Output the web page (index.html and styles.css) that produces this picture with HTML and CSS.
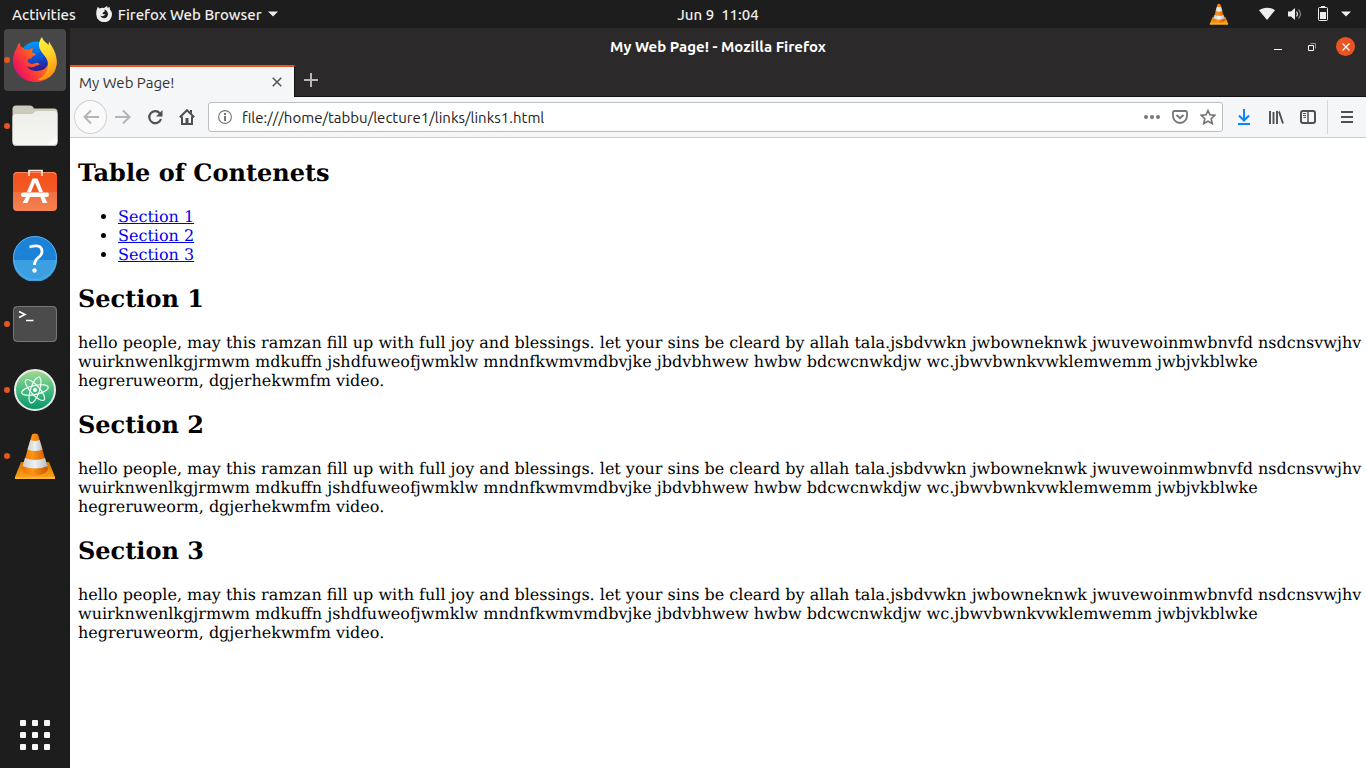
FILE: index.html
```html
<!DOCTYPE html>
<html lang="en">
<head>
<meta charset="utf-8">
<title>My Web Page! - Mozilla Firefox</title>
<link rel="stylesheet" href="styles.css">
</head>
<body class="desktop">
<svg width="0" height="0" class="defs" aria-hidden="true">
  <defs>
    <linearGradient id="coneBody" x1="0" x2="1" y1="0" y2="0"><stop offset="0" stop-color="#e87400"/><stop offset=".4" stop-color="#ff9416"/><stop offset="1" stop-color="#c85500"/></linearGradient>
    <linearGradient id="coneBase" x1="0" x2="0" y1="0" y2="1"><stop offset="0" stop-color="#d87500"/><stop offset="1" stop-color="#ffa61a"/></linearGradient>
    <linearGradient id="coneWhite" x1="0" x2="1" y1="0" y2="0"><stop offset="0" stop-color="#c9ced2"/><stop offset=".5" stop-color="#eef1f3"/><stop offset="1" stop-color="#b8bdc2"/></linearGradient>
    <symbol id="cone" viewBox="0 0 44 48">
      <path d="M8 30h28l6 15v2H2v-2z" fill="url(#coneBase)"/>
      <path d="M2 45h40v2H2z" fill="#ffb43b"/>
      <path d="M19 2.500q3-2 6 0L35 37q-2 6-13 6T9 37z" fill="url(#coneBody)"/>
      <path d="M17.400 8q4.600 2 9.200 0l3 9.500q-7.600 3-15.200 0z" fill="url(#coneWhite)"/>
      <path d="M12 26q10 4 20 0l2.500 8q-12 5-25 0z" fill="url(#coneWhite)"/>
    </symbol>
  </defs>
</svg>

<header class="topbar">
  <div class="topbar-side topbar-start">
    <button class="shell-button">Activities</button>
    <button class="shell-button app-menu">
      <svg width="16" height="16" viewBox="0 0 16 16"><path d="M1 3 1.800.8 3.500 2.500Q5.500 1.500 8 2L11 0l.8 2L13.500.8l.5 2.700c1.300 1.500 2 3 2 4.800A7.800 7.800 0 0 1 .3 8.500C.1 6.500.3 4.500 1 3z" fill="#eee"/><path d="M8.500 3.500Q12 5 12 8.200 11.500 12 8 12.200 5 12 4.200 9.500q1.800 1.200 3.500.3L9.500 8.500 6.500 8 7 6.500l1.700-1z" fill="#1d1d1d"/></svg>
      <span>Firefox Web Browser</span>
      <svg width="10" height="6" viewBox="0 0 10 6"><path d="M0 0.500h10L5 5.500z" fill="#eee"/></svg>
    </button>
  </div>
  <button class="shell-button clock">Jun 9&nbsp; 11:04</button>
  <div class="topbar-side topbar-end">
    <button class="shell-button" aria-label="VLC"><svg width="20" height="22"><use href="#cone"/></svg></button>
    <button class="shell-button status" aria-label="System menu">
      <svg width="16" height="14" viewBox="0 0 16 14"><path d="M0 3.200C4.500-.2 11.500-.2 16 3.200L8 13z" fill="#eee"/></svg>
      <svg width="16" height="14" viewBox="0 0 16 14"><path d="M1 4.500h3L8 1v12L4 9.500H1z" fill="#eee"/><path d="M9.500 4.500q2 2.500 0 5" fill="none" stroke="#ddd" stroke-width="1.200"/><path d="M11.500 2.500q4 4.500 0 9" fill="none" stroke="#888" stroke-width="1.200"/></svg>
      <svg width="16" height="16" viewBox="0 0 16 16"><path d="M6 0h4v2H6z" fill="#eee"/><rect x="3.500" y="1.500" width="9" height="13" rx="1" fill="none" stroke="#eee"/><path d="M5 6h6v7H5z" fill="#eee"/></svg>
      <svg class="status-arrow" width="10" height="6" viewBox="0 0 10 6"><path d="M0 .5h10L5 5.500z" fill="#eee"/></svg>
    </button>
  </div>
</header>

<div class="workspace">
  <nav class="dock" aria-label="Dock">
    <button class="dock-item running focused" aria-label="Firefox Web Browser">
      <svg width="46" height="46" viewBox="0 0 46 46">
        <defs>
          <linearGradient id="fxFire" x1="0" y1=".8" x2="1" y2=".2"><stop offset="0" stop-color="#c8108c"/><stop offset=".2" stop-color="#f5204f"/><stop offset=".5" stop-color="#ff5a22"/><stop offset="1" stop-color="#ffae12"/></linearGradient>
          <linearGradient id="fxGlobe" x1=".4" y1="0" x2=".6" y2="1"><stop offset="0" stop-color="#009cff"/><stop offset=".55" stop-color="#0755d5"/><stop offset="1" stop-color="#36148a"/></linearGradient>
          <linearGradient id="fxTail" x1=".2" y1="0" x2=".5" y2="1"><stop offset="0" stop-color="#fff23b"/><stop offset=".45" stop-color="#ffd62b"/><stop offset="1" stop-color="#ff8b13"/></linearGradient>
        </defs>
        <path d="M1 24.500c0-5 1-9.500 3.500-13Q5 8 7.500 5.500 8 9 9.500 10.500L36 12c6 3 9 8 8.500 15C43 38 34 45 23 45S1 36 1 24.500z" fill="url(#fxFire)"/>
        <path d="M12 10q5-5.500 13-5.500 12 2 12 18-1 11.500-13 11.500-7-.5-9.500-5 5 2.500 9 0 2.500-1.500 4-1l-.5-1.500q-2-1.500-5 0-3.500 1.500-6.500-2 0-2.500 2-3h2q.5-2 4.500-4-.5-1.500-4-2-.5-2 1.500-4.500-3 0-5 2-2.500-1-4.500-1z" fill="url(#fxGlobe)"/>
        <path d="M30 0c1 4 4 5 6.500 8L37 4.500l3 5c5 8 6.500 17 2.500 25-4 7-12 9-17 8.500 9-5 11.500-11 10-19C34 18 27 15 27 8c0-3 1-6 3-8z" fill="url(#fxTail)"/>
      </svg>
    </button>
    <button class="dock-item running" aria-label="Files">
      <svg width="46" height="42" viewBox="0 0 46 42">
        <defs><linearGradient id="folder" x1="0" x2="0" y1="0" y2="1"><stop offset="0" stop-color="#eeeeeb"/><stop offset="1" stop-color="#f6f6f3"/></linearGradient></defs>
        <path d="M.5 37V4Q.5.500 4 .5h14q2.500 0 3 1.500l1 1.500H42q3.500 0 3.500 3.500v30z" fill="#cdc9bb"/>
        <path d="M.5 12q0-3 3.500-3h15q2 0 3-1.500T25 6h17q3.500 0 3.500 3v28q0 4-4 4h-37q-4 0-4-4z" fill="url(#folder)"/>
        <path d="M35 40.500 45 30v7q0 3.500-4 3.500z" fill="#fbfbf9"/>
        <path d="M1 38.500q1 2 4 2h36q4 0 4-2" fill="none" stroke="#bdbbb5"/>
      </svg>
    </button>
    <button class="dock-item" aria-label="Ubuntu Software">
      <svg width="46" height="46" viewBox="0 2 46 46">
        <defs><linearGradient id="bag" x1="0" x2="0" y1="0" y2="1"><stop offset="0" stop-color="#f4511b"/><stop offset=".5" stop-color="#f25a27"/><stop offset=".52" stop-color="#f07040"/><stop offset="1" stop-color="#f4834f"/></linearGradient></defs>
        <rect x="1" y="5" width="44" height="39" rx="4" fill="url(#bag)"/>
        <path d="M2 8q0-2.500 3-2.500h36q3 0 3 2.500" fill="none" stroke="#ff8a5c"/>
        <path d="M17 9V3.700h13V9" fill="none" stroke="#ffe8dc" stroke-width="1.700"/>
        <path d="M20.500 11.500h5L31 25h-4l-4-9.500L19 25h-4z" fill="#fff"/>
        <path d="M14 30h4l-2.500 6h-5zM28.500 30h4l3 6h-5z" fill="#fff"/>
        <rect x="9" y="25.500" width="28" height="4.500" rx="2.200" fill="#fff"/>
      </svg>
    </button>
    <button class="dock-item" aria-label="Help">
      <svg width="46" height="46" viewBox="0 0 46 46">
        <circle cx="23" cy="23" r="22" fill="#1c82d8"/><path d="M1 25h44a22 22 0 0 1-44 0z" fill="#3c9fe2"/><circle cx="23" cy="23" r="21.500" fill="none" stroke="#59afe8"/>
        <path d="M17.500 12q12-3.500 12.500 4 .3 3.500-3.700 6.700-3.800 3-3.800 7.300" fill="none" stroke="#fff" stroke-width="2.800"/><circle cx="22.500" cy="35.500" r="2.200" fill="#fff"/>
      </svg>
    </button>
    <button class="dock-item running" aria-label="Terminal">
      <svg width="46" height="38" viewBox="0 0 46 38">
        <rect x="1" y="1" width="44" height="36" rx="4" fill="#4b4b4b"/><rect x="1.500" y="1.500" width="43" height="35" rx="4" fill="none" stroke="#777"/>
        <path d="m7 6.500 6 3-6 3M14 15.500h7.500" fill="none" stroke="#fff" stroke-width="1.600"/>
      </svg>
    </button>
    <button class="dock-item running" aria-label="Atom">
      <svg width="46" height="46" viewBox="0 0 46 46">
        <defs><linearGradient id="atom" x1="0" x2="0" y1="0" y2="1"><stop offset="0" stop-color="#a5dc91"/><stop offset=".5" stop-color="#48bb81"/><stop offset="1" stop-color="#059669"/></linearGradient></defs>
        <circle cx="23" cy="23" r="20" fill="url(#atom)" stroke="#ececec" stroke-width="2"/>
        <g fill="none" stroke="#f0fff5" stroke-width="1.200"><ellipse cx="23" cy="23" rx="13.500" ry="4.500" transform="rotate(-12 23 23)"/><ellipse cx="23" cy="23" rx="13.500" ry="4.500" transform="rotate(48 23 23)"/><ellipse cx="23" cy="23" rx="13.500" ry="4.500" transform="rotate(108 23 23)"/></g>
        <circle cx="23" cy="23" r="2" fill="#fff"/>
      </svg>
    </button>
    <button class="dock-item running" aria-label="VLC media player">
      <svg width="44" height="48"><use href="#cone"/></svg>
    </button>
    <button class="dock-item show-apps" aria-label="Show Applications">
      <svg width="30" height="30" viewBox="0 0 30 30" fill="#f6f6f6"><rect width="6" height="6" rx="1"/><rect x="12" width="6" height="6" rx="1"/><rect x="24" width="6" height="6" rx="1"/><rect y="12" width="6" height="6" rx="1"/><rect x="12" y="12" width="6" height="6" rx="1"/><rect x="24" y="12" width="6" height="6" rx="1"/><rect y="24" width="6" height="6" rx="1"/><rect x="12" y="24" width="6" height="6" rx="1"/><rect x="24" y="24" width="6" height="6" rx="1"/></svg>
    </button>
  </nav>

  <section class="window">
    <div class="titlebar">
      <span class="window-title">My Web Page! - Mozilla Firefox</span>
      <div class="window-controls">
        <button class="window-button" aria-label="Minimize"><svg width="8" height="8"><path d="M0 6h8v1H0z" fill="#fff"/></svg></button>
        <button class="window-button" aria-label="Restore"><svg width="8" height="8" viewBox="0 0 8 8" fill="none"><path d="M2.500.5h5v5" stroke="#999"/><path d="M.5 2.500h5v5h-5z" stroke="#fff"/></svg></button>
        <button class="window-button close" aria-label="Close"><svg width="8" height="8" viewBox="0 0 8 8"><path d="m.5.5 7 7m0-7-7 7" stroke="#fff" stroke-width="1.300"/></svg></button>
      </div>
    </div>
    <div class="tabstrip">
      <div class="tab">
        <span>My Web Page!</span>
        <button class="tab-close" aria-label="Close tab"><svg width="10" height="10" viewBox="0 0 10 10"><path d="m.7.7 8.600 8.600m0-8.600L.7 9.300" stroke="#555" stroke-width="1.500"/></svg></button>
      </div>
      <button class="new-tab" aria-label="New tab"><svg width="14" height="14" viewBox="0 0 14 14"><path d="M7 0v14M0 7h14" stroke="#b9b8b9" stroke-width="2"/></svg></button>
    </div>
    <div class="toolbar">
      <button class="tool back" aria-label="Back"><svg width="16" height="16" viewBox="0 0 16 16"><path d="M16 8H1.500M8 1.500 1.500 8 8 14.500" fill="none" stroke="#b4b4b5" stroke-width="2"/></svg></button>
      <button class="tool" aria-label="Forward"><svg width="16" height="16" viewBox="0 0 16 16"><path d="M0 8h14.500M8 1.500 14.500 8 8 14.500" fill="none" stroke="#b4b4b5" stroke-width="2"/></svg></button>
      <button class="tool" aria-label="Reload"><svg width="16" height="16" viewBox="0 0 16 16"><path d="M12.800 4.200A6 6 0 1 0 14 10" fill="none" stroke="#505051" stroke-width="2.200"/><path d="M15.500 1v6.500H9z" fill="#505051"/></svg></button>
      <button class="tool" aria-label="Home"><svg width="16" height="16" viewBox="0 0 16 16"><path d="m0.800 8.200 7.200-7 7.200 7M3 7.500V15h10V7.500" fill="none" stroke="#505051" stroke-width="2"/><path d="M6.500 9h3v6h-3z" fill="#505051"/><path d="M11 1h2v4l-2-2z" fill="#505051"/></svg></button>
      <div class="urlbar">
        <button class="field-button" aria-label="Site information"><svg width="14" height="14" viewBox="0 0 14 14"><circle cx="7" cy="7" r="6.400" fill="none" stroke="#777" stroke-width="1.100"/><path d="M6 3h2v2H6zM6 6h2v5H6z" fill="#777"/></svg></button>
        <input class="address" type="text" aria-label="Address" value="file:///home/tabbu/lecture1/links/links1.html">
        <button class="field-button" aria-label="Page actions"><svg width="16" height="4" viewBox="0 0 16 4" fill="#777"><circle cx="2" cy="2" r="2"/><circle cx="8" cy="2" r="2"/><circle cx="14" cy="2" r="2"/></svg></button>
        <button class="field-button" aria-label="Save to Pocket"><svg width="16" height="14" viewBox="0 0 16 14" fill="none" stroke="#777" stroke-width="1.800"><path d="M2.500 1h11q1.500 0 1.500 1.500V6A7 7 0 0 1 1 6V2.500Q1 1 2.500 1z"/><path d="M4.500 5 8 8.200 11.500 5" stroke-width="2"/></svg></button>
        <button class="field-button" aria-label="Bookmark"><svg width="16" height="16" viewBox="0 0 16 16"><path d="m8 1.500 1.900 4.300 4.900.5-3.600 3.400 1 4.900L8 12.200l-4.200 2.400 1-4.900L1.200 6.300l4.900-.5z" fill="none" stroke="#777" stroke-width="1.700"/></svg></button>
      </div>
      <button class="tool" aria-label="Downloads"><svg width="14" height="16" viewBox="0 0 14 16"><path d="M7 0v11M2 6.500l5 5 5-5M1 15h12" fill="none" stroke="#0a84ff" stroke-width="2"/></svg></button>
      <button class="tool" aria-label="Library"><svg width="16" height="14" viewBox="0 0 16 14"><path d="M2 1v13M5.500 2v12M9 1v13M11 1.500l4 12" stroke="#505051" stroke-width="1.900"/></svg></button>
      <button class="tool" aria-label="Sidebars"><svg width="16" height="14" viewBox="0 0 16 14"><rect x="1" y="1" width="14" height="12" rx="2" fill="none" stroke="#505051" stroke-width="2"/><path d="M8 1v12" stroke="#505051" stroke-width="1.500"/><path d="M3 3.500h3M3 5.500h3M3.500 7.500H6" stroke="#505051"/></svg></button>
      <span class="separator"></span>
      <button class="tool" aria-label="Menu"><svg width="12" height="12" viewBox="0 0 12 12"><path d="M0 1h12M0 6h12M0 11h12" stroke="#505051" stroke-width="2"/></svg></button>
    </div>
    <main class="page">
      <h2>Table of Contenets</h2>
      <ul>
        <li><a href="#s1">Section 1</a></li>
        <li><a href="#s2">Section 2</a></li>
        <li><a href="#s3">Section 3</a></li>
      </ul>
      <h2 id="s1">Section 1</h2>
      <p>hello people, may this ramzan fill up with full joy and blessings. let your sins be cleard by allah tala.jsbdvwkn jwbowneknwk jwuvewoinmwbnvfd nsdcnsvwjhv wuirknwenlkgjrmwm mdkuffn jshdfuweofjwmklw mndnfkwmvmdbvjke jbdvbhwew hwbw bdcwcnwkdjw wc.jbwvbwnkvwklemwemm jwbjvkblwke hegreruweorm, dgjerhekwmfm video.</p>
      <h2 id="s2">Section 2</h2>
      <p>hello people, may this ramzan fill up with full joy and blessings. let your sins be cleard by allah tala.jsbdvwkn jwbowneknwk jwuvewoinmwbnvfd nsdcnsvwjhv wuirknwenlkgjrmwm mdkuffn jshdfuweofjwmklw mndnfkwmvmdbvjke jbdvbhwew hwbw bdcwcnwkdjw wc.jbwvbwnkvwklemwemm jwbjvkblwke hegreruweorm, dgjerhekwmfm video.</p>
      <h2 id="s3">Section 3</h2>
      <p>hello people, may this ramzan fill up with full joy and blessings. let your sins be cleard by allah tala.jsbdvwkn jwbowneknwk jwuvewoinmwbnvfd nsdcnsvwjhv wuirknwenlkgjrmwm mdkuffn jshdfuweofjwmklw mndnfkwmvmdbvjke jbdvbhwew hwbw bdcwcnwkdjw wc.jbwvbwnkvwklemwemm jwbjvkblwke hegreruweorm, dgjerhekwmfm video.</p>
    </main>
  </section>
</div>
</body>
</html>
```
FILE: styles.css
```css
*, *::before, *::after { box-sizing: border-box; }

.desktop {
  margin: 0;
  min-height: 100vh;
  display: flex;
  flex-direction: column;
  background: #1d1d1d;
  font-family: Ubuntu, "Noto Sans", sans-serif;
  font-size: 15px;
}

.defs { position: absolute; }

button {
  display: flex;
  align-items: center;
  justify-content: center;
  padding: 0;
  border: 0;
  background: none;
  color: inherit;
  font: inherit;
}

svg { display: block; flex: none; }

/* Shell top bar: the clock is centred over the window area, right of the dock */
.topbar {
  display: grid;
  grid-template-columns: 1fr auto 1fr;
  align-items: center;
  height: 28px;
  padding: 0 15px 0 85px;
  background: #1d1d1d;
  color: #eee;
}
.topbar-side { display: flex; align-items: center; gap: 20px; }
.topbar-start { margin-left: -73px; }
.topbar-end { justify-content: flex-end; gap: 30px; }
.shell-button { height: 26px; font-weight: 500; white-space: nowrap; }
.app-menu { gap: 6px; }
.status { gap: 12px; }
.status-arrow { margin-left: -2px; }

.workspace { flex: 1; display: flex; }

/* Dock */
.dock {
  flex: none;
  width: 70px;
  display: flex;
  flex-direction: column;
  align-items: center;
  gap: 4px;
  padding: 1px 0 2px;
  background: #1d1d1d;
}
.dock-item {
  position: relative;
  width: 62px;
  height: 62px;
  border-radius: 4px;
}
.focused { background: #474747; }
.running::before {
  content: "";
  position: absolute;
  left: 0;
  top: 28px;
  width: 6px;
  height: 6px;
  border-radius: 50%;
  background: #e95420;
}
.show-apps { margin-top: auto; }

/* Browser window */
.window { flex: 1; min-width: 0; display: flex; flex-direction: column; background: #fff; }

.titlebar {
  display: grid;
  grid-template-columns: 1fr auto 1fr;
  align-items: center;
  height: 37px;
  padding: 0 11px;
  background: #2c292a;
  color: #fff;
}
.window-title { grid-column: 2; font-weight: 700; }
.window-controls { display: flex; justify-content: flex-end; gap: 15px; }
.window-button { width: 19px; height: 19px; border-radius: 50%; }
.close { background: #e95420; }

.tabstrip { display: flex; height: 32px; background: #2c292a; box-shadow: inset 0 -1px #141314; }
.tab {
  display: flex;
  align-items: center;
  justify-content: space-between;
  width: 225px;
  padding: 0 8px 0 9px;
  border-top: 2px solid #e95420;
  border-right: 1px solid #141314;
  background: #f5f6f7;
  color: #333;
}
.tab-close { width: 18px; height: 18px; }
.new-tab { width: 32px; height: 30px; }

.toolbar {
  display: flex;
  align-items: center;
  height: 41px;
  padding: 0 3px 0 4px;
  border-bottom: 1px solid #ccccd0;
  background: #f5f6f7;
}
.tool { flex: none; width: 32px; height: 32px; }
.back { width: 33px; height: 34px; border: 1px solid #d2d2d4; border-radius: 50%; background: #fafafa; }
.urlbar {
  flex: 1;
  min-width: 0;
  display: flex;
  align-items: center;
  height: 30px;
  margin: 0 5px;
  padding: 0 4px 0 6px;
  border: 1px solid #bcbec5;
  border-radius: 3px;
  background: #fff;
}
.field-button { flex: none; width: 20px; height: 28px; margin-right: 8px; }
.field-button:last-child { margin-right: 0; }
.address {
  flex: 1;
  min-width: 0;
  height: 26px;
  padding: 0;
  margin-left: -1px;
  border: 0;
  outline: 0;
  background: none;
  color: #222;
  font: inherit;
}
.separator { width: 1px; height: 34px; margin: 0 3px; background: #d6d6d9; }

/* Document */
.page {
  flex: 1;
  padding: 20px 0 20px 8px;
  background: #fff;
  color: #000;
  font-family: "DejaVu Serif", serif;
  font-size: 16px;
  line-height: 19px;
  text-rendering: geometricPrecision;
}
.page h2 { margin: 20px 0; font-size: 24px; line-height: 29px; }
.page h2:first-child { margin-top: 0; }
.page ul { margin: 0; padding-left: 40px; }
.page p { margin: 0; }
.page a { color: #00e; }
```
